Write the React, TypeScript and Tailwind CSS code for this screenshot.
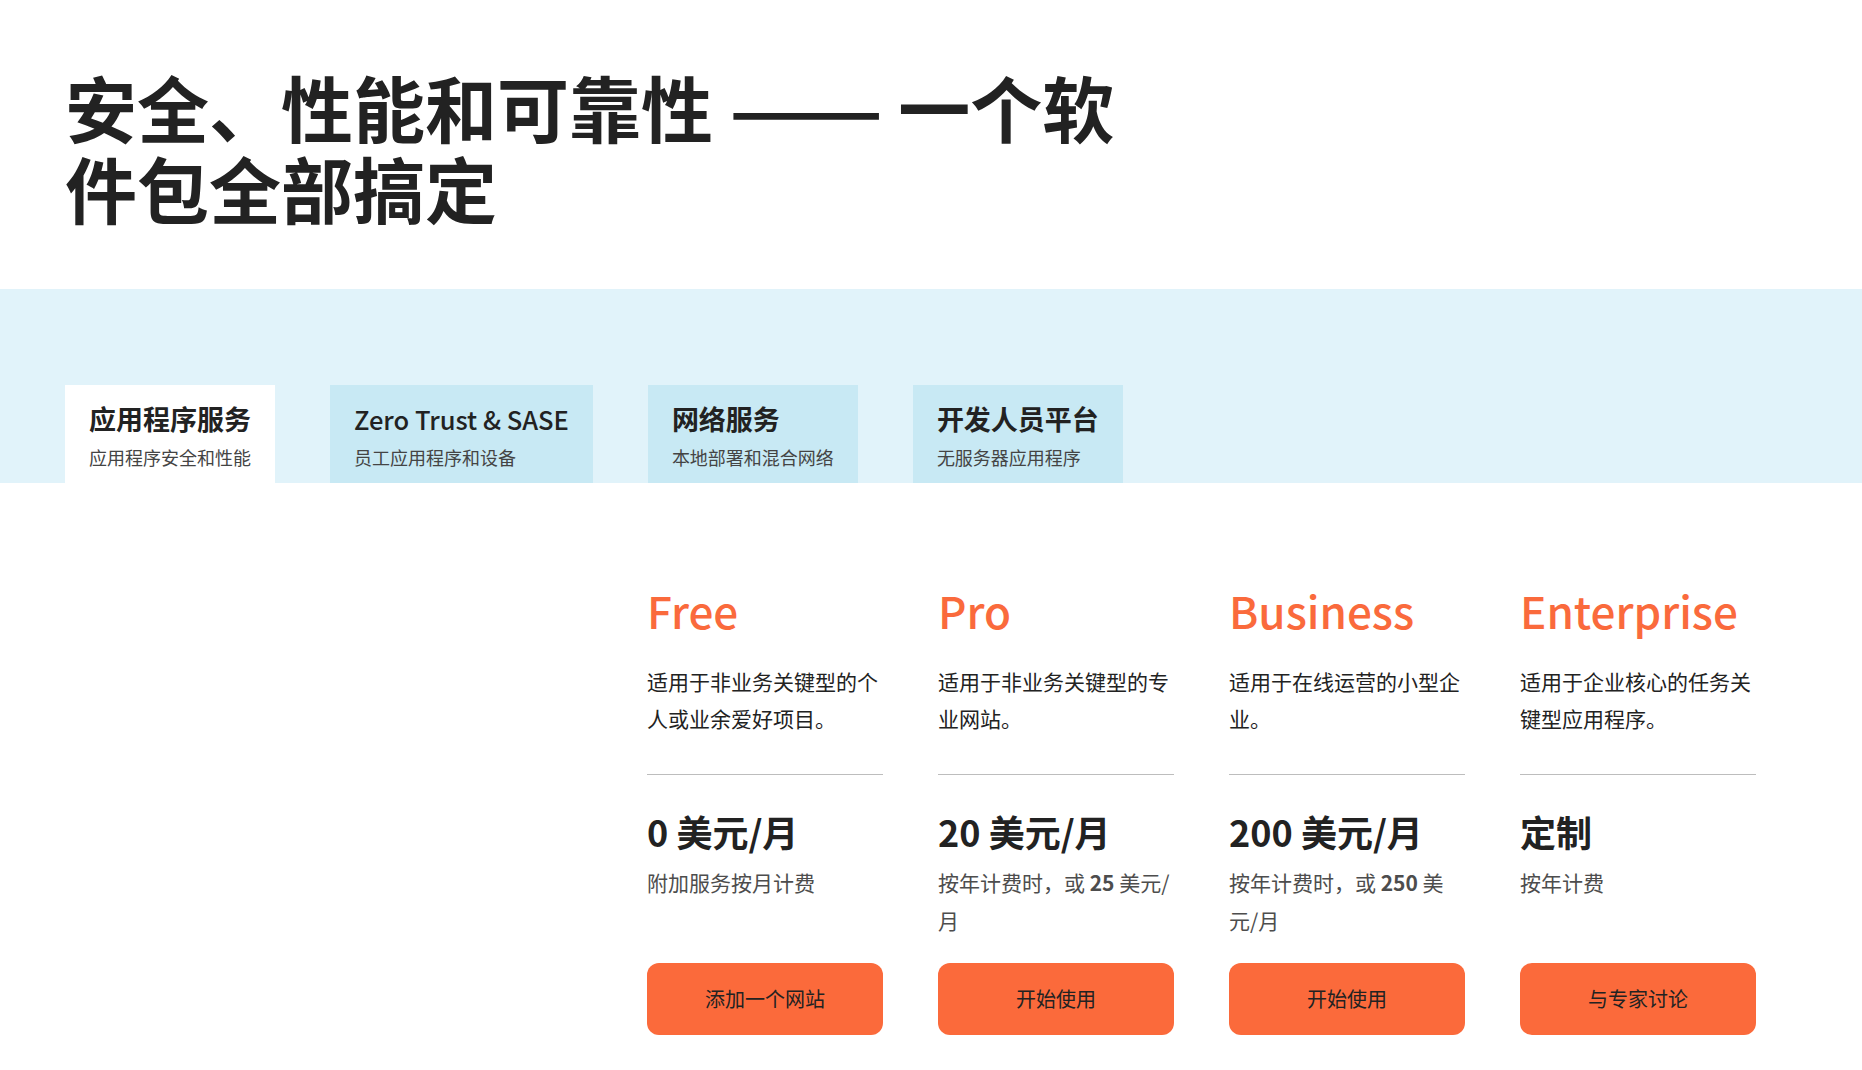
import React from 'react';

const tabs = [
  { id: 1, title: '应用程序服务', sub: '应用程序安全和性能', active: true, latin: false },
  { id: 2, title: 'Zero Trust & SASE', sub: '员工应用程序和设备', active: false, latin: true },
  { id: 3, title: '网络服务', sub: '本地部署和混合网络', active: false, latin: false },
  { id: 4, title: '开发人员平台', sub: '无服务器应用程序', active: false, latin: false },
];

const plans = [
  {
    id: 'free',
    name: 'Free',
    desc: '适用于非业务关键型的个人或业余爱好项目。',
    price: '0 美元/月',
    note: <>附加服务按月计费</>,
    cta: '添加一个网站',
  },
  {
    id: 'pro',
    name: 'Pro',
    desc: '适用于非业务关键型的专业网站。',
    price: '20 美元/月',
    note: (
      <>
        按年计费时，或 <span className="font-bold">25</span> 美元/月
      </>
    ),
    cta: '开始使用',
  },
  {
    id: 'business',
    name: 'Business',
    desc: '适用于在线运营的小型企业。',
    price: '200 美元/月',
    note: (
      <>
        按年计费时，或 <span className="font-bold">250</span> 美元/月
      </>
    ),
    cta: '开始使用',
  },
  {
    id: 'enterprise',
    name: 'Enterprise',
    desc: '适用于企业核心的任务关键型应用程序。',
    price: '定制',
    note: <>按年计费</>,
    cta: '与专家讨论',
  },
];

const App: React.FC = () => {
  return (
    <div className="min-h-screen bg-white font-['Noto_Sans_CJK_SC','Noto_Sans',sans-serif] text-[#222]">
      {/* heading */}
      <section className="px-[65px] pt-[65px]">
        <h1 className="max-w-[1080px] text-[72px] leading-[81px] font-bold text-[#222]">
          安全、性能和可靠性 <span className="mr-[30px] inline-block origin-left scale-x-[1.26]">——</span> 一个软件包全部搞定
        </h1>
      </section>

      {/* product tabs */}
      <section className="mt-[62px] bg-[#e1f3fa] pt-[96px]">
        <div className="flex gap-[55px] px-[65px]">
          {tabs.map((tab) => (
            <div
              key={tab.id}
              className={`h-[98px] px-6 pt-[16px] ${tab.active ? 'bg-white' : 'bg-[#c8e9f4]'}`}
            >
              <div
                className={`leading-[36px] text-[#222] whitespace-nowrap ${
                  tab.latin ? 'text-[25.5px] font-medium' : 'text-[27px] font-bold'
                }`}
              >
                {tab.title}
              </div>
              <div className="mt-[7px] text-[18px] leading-[27px] text-[#444] whitespace-nowrap">{tab.sub}</div>
            </div>
          ))}
        </div>
      </section>

      {/* plans */}
      <section className="px-[65px] pt-[98px]">
        <div className="grid grid-cols-[repeat(6,236px)] gap-x-[55px]">
          {plans.map((plan, i) => (
            <div key={plan.id} className={`flex flex-col ${i === 0 ? 'col-start-3' : ''}`}>
              <h3 className="text-[44px] leading-[58px] font-medium text-[#fa6a3c]">{plan.name}</h3>
              <p className="mt-[24px] border-b border-[#bdbdbd] pb-[37px] text-[21px] leading-[37px] text-[#222]">
                {plan.desc}
              </p>
              <div className="mt-[33px] text-[36px] leading-[46px] font-bold text-[#222]">{plan.price}</div>
              <p className="mt-[9px] min-h-[76px] text-[21px] leading-[38px] text-[#4d4d4d]">{plan.note}</p>
              <button className="mt-[24px] h-[72px] w-full rounded-[12px] bg-[#fb6a3b] text-[20px] text-[#222]">
                {plan.cta}
              </button>
            </div>
          ))}
        </div>
      </section>
    </div>
  );
};

export default App;
